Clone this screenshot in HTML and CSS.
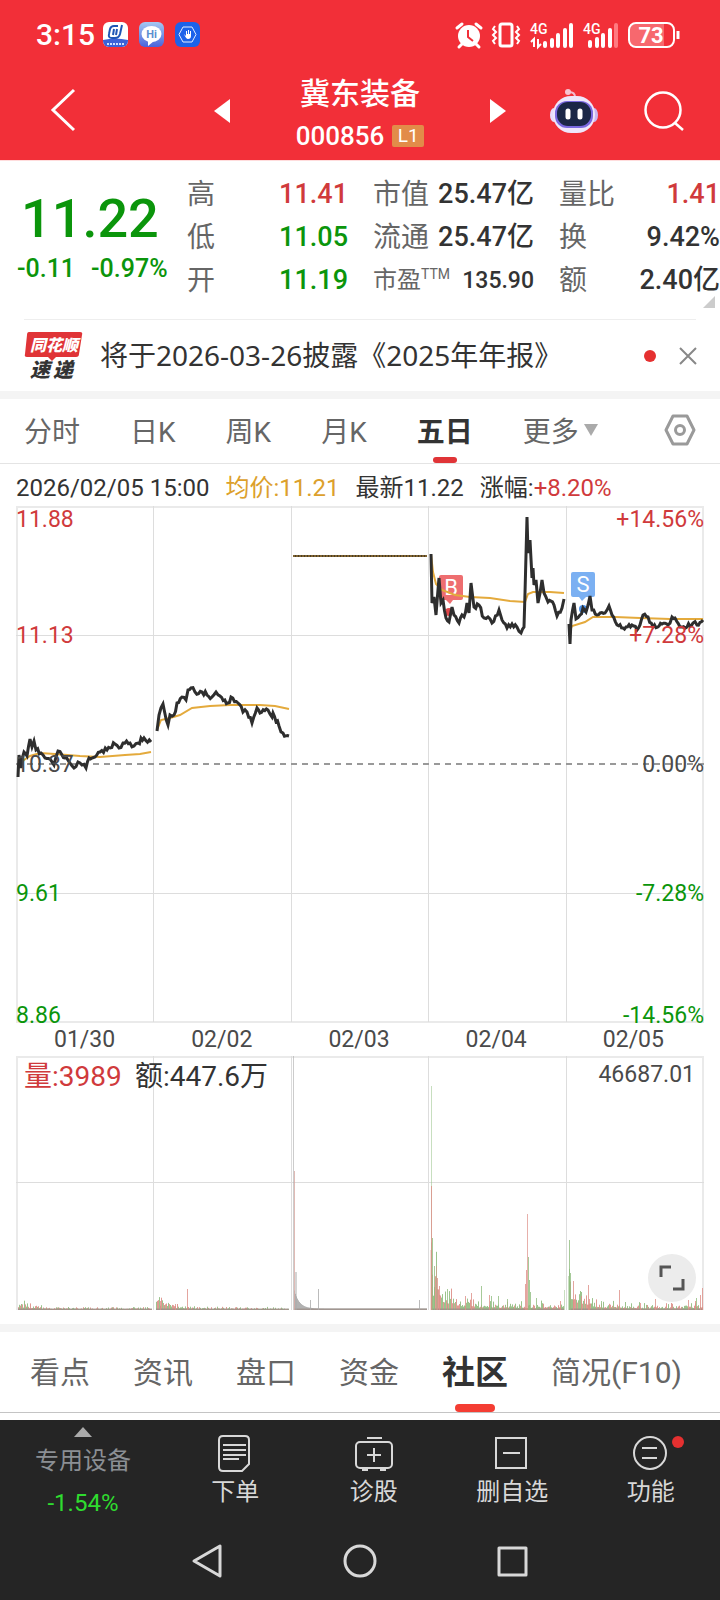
FILE: index.html
```html
<!DOCTYPE html>
<html lang="zh-CN">
<head>
  <meta charset="UTF-8">
  <meta name="viewport" content="width=device-width, initial-scale=1.0">
  <title>冀东装备 000856</title>
  <link rel="stylesheet" href="styles.css">
</head>
<body>
  <header class="header">
    <div class="status-bar">
      <span class="time">3:15</span>
      <svg class="app-icon" width="25" height="25" viewBox="0 0 25 25">
        <rect width="25" height="25" rx="6" fill="#fff"/>
        <path d="M0 18q12-3 25 0v1a6 6 0 0 1-6 6H6a6 6 0 0 1-6-6z" fill="#3c62d8"/>
        <path d="M19 3l-2 9q-1 4-5 4H9q-4 0-3-4l1-5q1-3 4-3h4M11 7l-1 6M14 7l-1 6" fill="none" stroke="#1f55b5" stroke-width="2"/>
        <path d="M4 22h17" stroke="#cfe0ff" stroke-width="2" stroke-dasharray="2 1"/>
      </svg>
      <svg class="app-icon" width="25" height="25" viewBox="0 0 25 25">
        <defs><linearGradient id="hi" x1="0" y1="0" x2="0" y2="1"><stop offset="0" stop-color="#a5c8f2"/><stop offset="1" stop-color="#4a63dc"/></linearGradient></defs>
        <rect width="25" height="25" rx="6" fill="url(#hi)"/>
        <ellipse cx="12.500" cy="12" rx="10" ry="8" fill="#fff"/>
        <path d="M9 18v6l6-5z" fill="#fff"/>
        <text x="12.500" y="16" text-anchor="middle" font-size="11" font-weight="700" fill="#5b8fd0">Hi</text>
      </svg>
      <svg class="app-icon" width="25" height="25" viewBox="0 0 25 25">
        <rect width="25" height="25" rx="6" fill="#1c62ea"/>
        <path d="M8 5h9l4 7.500-4 7.500H8l-4-7.500z" fill="none" stroke="#e3edff"/>
        <path d="M9 12l2 2V9h1v3h1V8h1v4h1V9h1v5q0 3-3 3-2 0-4-5z" fill="#fff"/>
      </svg>
      <div class="status-right">
        <svg width="26" height="26" viewBox="0 0 26 26">
          <circle cx="13" cy="14" r="11" fill="#fff"/>
          <path d="M1 6l5-4M25 6l-5-4M6 22l-3 3M20 22l3 3" stroke="#fff" stroke-width="3" stroke-linecap="round"/>
          <path d="M12 8v7l5 4" fill="none" stroke="#f22f38" stroke-width="2"/>
        </svg>
        <svg width="30" height="26" viewBox="0 0 30 26" fill="none" stroke="#fff">
          <rect x="9" y="2" width="12" height="22" rx="2" stroke-width="3"/>
          <path d="M4 4L2 7l3 3-3 3 3 3-3 3 2 3M26 4l2 3-3 3 3 3-3 3 3 3-2 3" stroke-width="2"/>
        </svg>
        <svg width="44" height="26" viewBox="0 0 44 26">
          <text x="0" y="12" font-size="14" font-weight="500" fill="#fff">4G</text>
          <path d="M4 25v-8l-3 3M8 17v8l3-3" fill="none" stroke="#fff" stroke-width="2"/>
          <path d="M15 24v-3M22 24v-6M28 24v-11M35 24V8M41 24V3" stroke="#fff" stroke-width="4" stroke-linecap="round"/>
        </svg>
        <svg width="36" height="26" viewBox="0 0 36 26">
          <text x="0" y="12" font-size="14" font-weight="500" fill="#fff">4G</text>
          <path d="M7 24v-4M14 24v-7M20 24v-11M27 24V8" stroke="#fff" stroke-width="4" stroke-linecap="round"/>
          <path d="M33 24V3" stroke="#ff7a80" stroke-width="4" stroke-linecap="round"/>
        </svg>
        <svg width="52" height="26" viewBox="0 0 52 26">
          <path d="M8 2h28v22H8q-6 0-6-6V8q0-6 6-6z" fill="#f7686e"/>
          <rect x="1" y="1" width="45" height="24" rx="7" fill="none" stroke="#fff" stroke-width="2"/>
          <path d="M50 9v8" stroke="#fff" stroke-width="3"/>
          <text x="23" y="21" text-anchor="middle" font-size="22" font-weight="700" fill="#fff">73</text>
        </svg>
      </div>
    </div>
    <div class="title-bar">
      <button class="icon-btn back" aria-label="返回">
        <svg width="26" height="44" viewBox="0 0 26 44"><path d="M24 1L3 21l21 20" fill="none" stroke="#fff" stroke-width="3"/></svg>
      </button>
      <div class="stock-switch">
        <button class="icon-btn" aria-label="上一只"><svg width="16" height="24" viewBox="0 0 16 24"><path d="M16 0v24L0 12z" fill="#fff"/></svg></button>
        <div class="stock">
          <h1>冀东装备</h1>
          <p>000856 <span class="level">L1</span></p>
        </div>
        <button class="icon-btn" aria-label="下一只"><svg width="16" height="24" viewBox="0 0 16 24"><path d="M0 0v24l16-12z" fill="#fff"/></svg></button>
      </div>
      <div class="tools">
        <button class="icon-btn" aria-label="智能助手">
          <svg width="48" height="46" viewBox="0 0 48 46">
            <path d="M25 9q0-5-6-5" fill="none" stroke="#f3b9cf" stroke-width="2"/>
            <circle cx="18" cy="4" r="3" fill="#f7c3d2"/>
            <ellipse cx="4" cy="27" rx="4" ry="7" fill="#e9dcfa"/>
            <ellipse cx="44" cy="27" rx="4" ry="7" fill="#c9b8f2"/>
            <rect x="3" y="8" width="42" height="37" rx="18" fill="#eee6fb"/>
            <rect x="5" y="13" width="38" height="27" rx="12" fill="#7a69e0"/>
            <rect x="7" y="14" width="34" height="24" rx="11" fill="#1b2747"/>
            <path d="M18 23v6M30 23v6" stroke="#fff" stroke-width="5" stroke-linecap="round"/>
          </svg>
        </button>
        <button class="icon-btn" aria-label="搜索">
          <svg width="40" height="40" viewBox="0 0 40 40" fill="none" stroke="#fff" stroke-width="2.500"><circle cx="19" cy="19" r="17.500"/><path d="M31 32l8 7"/></svg>
        </button>
      </div>
    </div>
  </header>

  <main>
    <section class="quote">
      <div class="price down">
        <strong>11.22</strong>
        <p><span>-0.11</span><span>-0.97%</span></p>
      </div>
      <dl class="stats">
        <div><dt>高</dt><dd class="up">11.41</dd></div>
        <div><dt>市值</dt><dd>25.47亿</dd></div>
        <div><dt>量比</dt><dd class="up">1.41</dd></div>
        <div><dt>低</dt><dd class="down">11.05</dd></div>
        <div><dt>流通</dt><dd>25.47亿</dd></div>
        <div><dt>换</dt><dd>9.42%</dd></div>
        <div><dt>开</dt><dd class="down">11.19</dd></div>
        <div class="small"><dt>市盈<sup>TTM</sup></dt><dd>135.90</dd></div>
        <div><dt>额</dt><dd>2.40亿</dd></div>
      </dl>
      <span class="corner"></span>
    </section>

    <section class="notice">
      <svg class="notice-logo" width="60" height="54" viewBox="0 0 60 54" font-weight="900" font-style="italic">
        <path d="M5 3h51q3 0 2 3l-3 19q0 3-3 3H32l-4 4-4-4H3q-3 0-2-3L3 6q0-3 2-3z" fill="#e03437"/>
        <text x="6" y="22" font-size="16" fill="#fff">同花顺</text>
        <text x="6" y="48" font-size="20" fill="#333">速</text>
        <text x="29" y="48" font-size="20" fill="#333">递</text>
      </svg>
      <a href="#report">将于2026-03-26披露《2025年年报》</a>
      <span class="dot"></span>
      <button class="icon-btn" aria-label="关闭"><svg width="16" height="16" viewBox="0 0 16 16"><path d="M0 0l16 16M16 0L0 16" stroke="#888" stroke-width="2"/></svg></button>
    </section>

    <nav class="period-tabs">
      <button>分时</button>
      <button>日K</button>
      <button>周K</button>
      <button>月K</button>
      <button class="active">五日</button>
      <button class="more">更多 <svg width="14" height="12" viewBox="0 0 14 12"><path d="M0 0h14L7 12z" fill="#aaa"/></svg></button>
      <button class="setting" aria-label="设置">
        <svg width="32" height="32" viewBox="0 0 32 32" fill="none" stroke="#9a9a9a" stroke-width="3"><path d="M9 2h14l7 14-7 14H9L2 16z" stroke-linejoin="round"/><circle cx="16" cy="16" r="4.500"/></svg>
      </button>
    </nav>

    <section class="chart">
      <p class="chart-info">
        <span>2026/02/05 15:00</span>
        <span class="avg">均价:11.21</span>
        <span>最新11.22</span>
        <span>涨幅:<b>+8.20%</b></span>
      </p>
      <svg class="price-chart" viewBox="0 0 720 518">
        <g class="grid">
          <path d="M16 1h688M16 516h688M17 0v517M703 0v517" class="frame"/>
          <path d="M16 129.500h688M16 387.500h688M153.500 0v516M291.500 0v516M428.500 0v516M566.500 0v516"/>
        </g>
        <path d="M16 258h688" class="zero"/>
        <circle cx="449" cy="106" r="4" fill="#e0474a"/>
        <path d="M441 69h20q2 0 2 2v21q0 2-2 2h-8l-3 4-4-4h-5q-2 0-2-2V71q0-2 2-2z" fill="#ee6e70"/>
        <text x="451" y="89" class="mark">B</text>
        <circle cx="583" cy="103" r="4" fill="#4c92e8"/>
        <path d="M573 66h20q2 0 2 2v21q0 2-2 2h-7l-4 4-3-4h-6q-2 0-2-2V68q0-2 2-2z" fill="#7bb0f2"/>
        <text x="583" y="86" class="mark">S</text>
        <g id="lines"></g>
        <g class="labels">
          <text x="16" y="21" class="up">11.88</text>
          <text x="16" y="137" class="up">11.13</text>
          <text x="16" y="266">10.37</text>
          <text x="16" y="395" class="down">9.61</text>
          <text x="16" y="517" class="down">8.86</text>
        </g>
        <g class="labels end">
          <text x="704" y="21" class="up">+14.56%</text>
          <text x="704" y="137" class="up">+7.28%</text>
          <text x="704" y="266">0.00%</text>
          <text x="704" y="395" class="down">-7.28%</text>
          <text x="704" y="517" class="down">-14.56%</text>
        </g>
      </svg>
      <div class="dates">
        <span>01/30</span><span>02/02</span><span>02/03</span><span>02/04</span><span>02/05</span>
      </div>
      <div class="volume">
        <svg viewBox="0 0 720 254">
          <g class="grid">
            <path d="M16 1h688M17 0v254M703 0v254" class="frame"/>
            <path d="M16 126.500h688M153.500 0v254M291.500 0v254M428.500 0v254M566.500 0v254"/>
          </g>
          <g id="bars"></g>
          <text x="24" y="30" class="vol-text up">量:3989</text>
          <text x="135" y="30" class="vol-text">额:447.6万</text>
          <text x="695" y="26" class="vol-max">46687.01</text>
        </svg>
        <button class="expand" aria-label="全屏">
          <svg width="26" height="26" viewBox="0 0 26 26"><path d="M2 12V2h10M14 24h10V14" fill="none" stroke="#555" stroke-width="3"/></svg>
        </button>
      </div>
    </section>

    <nav class="info-tabs">
      <button>看点</button>
      <button>资讯</button>
      <button>盘口</button>
      <button>资金</button>
      <button class="active">社区</button>
      <button>简况(F10)</button>
    </nav>
  </main>

  <footer class="footer">
    <div class="actions">
      <a href="#industry" class="industry">
        <svg width="18" height="10" viewBox="0 0 18 10"><path d="M9 0l9 10H0z" fill="#aaa"/></svg>
        <span>专用设备</span>
        <em>-1.54%</em>
      </a>
      <button>
        <svg width="36" height="38" viewBox="0 0 36 38" fill="none" stroke="#d8d8d8" stroke-width="2"><path d="M6 2h22q4 0 4 4v24l-7 7H6q-4 0-4-4V6q0-4 4-4zM6 11h23M6 16h23M6 21h23M6 25h16"/></svg>
        <span>下单</span>
      </button>
      <button>
        <svg width="40" height="38" viewBox="0 0 40 38" fill="none" stroke="#d8d8d8" stroke-width="2"><rect x="2" y="8" width="36" height="26" rx="4"/><path d="M13 4h15M20 14v14M13 21h14M8 36h6M26 36h6"/></svg>
        <span>诊股</span>
      </button>
      <button>
        <svg width="36" height="38" viewBox="0 0 36 38" fill="none" stroke="#d8d8d8" stroke-width="2"><rect x="2" y="4" width="30" height="30"/><path d="M9 19h17"/></svg>
        <span>删自选</span>
      </button>
      <button>
        <svg width="36" height="38" viewBox="0 0 36 38" fill="none" stroke="#d8d8d8" stroke-width="2"><circle cx="17" cy="19" r="16"/><path d="M9 14h15M9 24h15"/></svg>
        <span>功能</span>
        <i class="badge"></i>
      </button>
    </div>
    <div class="system-nav">
      <button class="icon-btn" aria-label="系统返回"><svg width="30" height="34" viewBox="0 0 30 34"><path d="M27 2v30L1 17z" class="sys"/></svg></button>
      <button class="icon-btn" aria-label="主页"><svg width="34" height="34" viewBox="0 0 34 34"><circle cx="17" cy="17" r="15" class="sys"/></svg></button>
      <button class="icon-btn" aria-label="最近任务"><svg width="30" height="34" viewBox="0 0 30 34"><rect x="2" y="4" width="27" height="27" class="sys"/></svg></button>
    </div>
  </footer>
  <script src="chart.js"></script>
</body>
</html>
```
FILE: styles.css
```css
* {
  margin: 0;
  padding: 0;
  box-sizing: border-box;
}

body {
  font-family: Roboto, "Noto Sans CJK SC", sans-serif;
  background: #fff;
  color: #333;
}

svg {
  display: block;
  flex-shrink: 0;
  overflow: visible;
}

button {
  font: inherit;
  color: inherit;
  background: none;
  border: none;
  cursor: pointer;
}

a {
  color: inherit;
  text-decoration: none;
}

.up {
  color: #d03a3c;
  fill: #d03a3c;
}

.down {
  color: #0b950b;
  fill: #0b950b;
}

/* Header */
.header {
  background: #f22f38;
  color: #fff;
  padding-bottom: 3px;
  border-bottom: 1px solid #fdd;
}

.status-bar {
  display: flex;
  align-items: center;
  height: 65px;
  padding: 4px 40px 0 36px;
}

.time {
  font-size: 30px;
  font-weight: 500;
  margin-right: 8px;
}

.app-icon {
  margin-right: 11px;
}

.status-right {
  display: flex;
  gap: 9px;
  margin-left: auto;
}

.title-bar {
  display: grid;
  grid-template-columns: 1fr 292px 1fr;
  align-items: center;
  height: 92px;
  padding: 0 36px;
}

.back {
  padding-left: 14px;
  justify-self: start;
}

.stock-switch {
  display: flex;
  align-items: center;
  justify-content: space-between;
}

.stock {
  padding-top: 8px;
  text-align: center;
}

.stock h1 {
  font-size: 30px;
  font-weight: 500;
  line-height: 42px;
}

.stock p {
  display: flex;
  align-items: center;
  justify-content: center;
  gap: 8px;
  font-size: 26px;
  font-weight: 500;
  line-height: 42px;
}

.level {
  width: 32px;
  font-size: 19px;
  font-weight: 400;
  line-height: 22px;
  background: #e28c49;
  border-radius: 2px;
}

.tools {
  display: flex;
  align-items: center;
  justify-content: flex-end;
  gap: 46px;
}

/* Quote */
.quote {
  position: relative;
  display: flex;
  padding: 12px 0 17px 17px;
}

.price {
  width: 170px;
  flex-shrink: 0;
}

.price strong {
  display: block;
  padding-left: 4px;
  font-size: 54px;
  font-weight: 500;
  line-height: 60px;
  margin-top: 16px;
}

.price p {
  display: flex;
  gap: 16px;
  font-size: 25px;
  font-weight: 500;
  line-height: 40px;
}

.stats {
  flex: 1;
  display: grid;
  grid-template-columns: repeat(3, 1fr);
  column-gap: 25px;
}

.stats div {
  display: flex;
  justify-content: space-between;
  line-height: 43px;
  height: 43px;
  white-space: nowrap;
}

.stats dt {
  font-size: 28px;
  color: #666;
}

.stats dd {
  font-size: 27px;
  font-weight: 500;
}

.stats .small dt {
  font-size: 24px;
}

.stats .small dd {
  font-size: 23px;
}

.stats sup {
  font-size: 14px;
  line-height: 1;
}

.corner {
  position: absolute;
  right: 5px;
  bottom: 11px;
  border-bottom: 12px solid #ccc;
  border-left: 12px solid transparent;
}

/* Notice */
.notice {
  display: flex;
  align-items: center;
  height: 72px;
  margin: 0 24px;
  border-top: 1px solid #eee;
}

.notice a {
  flex: 1;
  margin-left: 16px;
  font-family: "Noto Sans", "Noto Sans CJK SC", sans-serif;
  font-size: 28px;
  line-height: 38px;
  padding-bottom: 2px;
  white-space: nowrap;
}

.notice .dot {
  width: 12px;
  height: 12px;
  margin-right: 24px;
  border-radius: 50%;
  background: #e53030;
}

/* Period tabs */
.period-tabs {
  display: flex;
  align-items: center;
  gap: 50px;
  height: 73px;
  padding: 0 24px;
  border-top: 8px solid #f4f4f4;
  border-bottom: 1px solid #e4e4e4;
  font-size: 28px;
  color: #666;
}

.period-tabs button {
  position: relative;
  height: 64px;
  padding-bottom: 2px;
  white-space: nowrap;
}

.period-tabs .active,
.info-tabs .active {
  font-weight: 700;
  color: #333;
}

.active::after {
  content: "";
  position: absolute;
  left: 50%;
  bottom: 0;
  width: 24px;
  height: 6px;
  border-radius: 4px;
  background: #e03437;
  transform: translateX(-50%);
}

.more {
  display: flex;
  align-items: center;
  gap: 5px;
}

.setting {
  margin-left: auto;
}

/* Charts */
.chart-info {
  display: flex;
  gap: 16px;
  padding: 6px 16px 0;
  font-size: 24px;
  line-height: 36px;
  white-space: nowrap;
}

.chart-info .avg {
  color: #dca02c;
}

.chart-info b {
  font-weight: 400;
  color: #d03a3c;
}

.price-chart,
.volume svg {
  width: 100%;
}

.grid path {
  fill: none;
  stroke: #ddd;
}

.grid .frame {
  stroke: #eaeaea;
  stroke-width: 2;
}

.zero {
  stroke: #999;
  stroke-width: 2;
  stroke-dasharray: 6 5;
}

.line {
  fill: none;
  stroke: #2e2e2e;
  stroke-width: 3;
}

.avg-line {
  fill: none;
  stroke: #e4aa3c;
  stroke-width: 2;
}

.limit-line {
  stroke: #4a3d26;
  stroke-width: 2;
}

.mark {
  font-size: 22px;
  fill: #fff;
  text-anchor: middle;
}

.labels {
  font-size: 23px;
  fill: #4a4a4a;
}

.end {
  text-anchor: end;
}

.dates {
  display: grid;
  grid-template-columns: repeat(5, 1fr);
  padding: 0 18px 0 16px;
  font-size: 23px;
  line-height: 32px;
  text-align: center;
  color: #4a4a4a;
}

.volume {
  position: relative;
  padding-bottom: 14px;
}

.vol-text {
  font-size: 28px;
}

.vol-text:not(.up) {
  fill: #333;
}

.vol-max {
  font-size: 23px;
  fill: #4a4a4a;
  text-anchor: end;
}

.volume .expand {
  position: absolute;
  right: 24px;
  bottom: 22px;
  width: 48px;
  height: 48px;
  border-radius: 50%;
  background: #ececec;
}

.expand svg {
  width: 26px;
  margin: 0 auto;
}

/* Info tabs */
.info-tabs {
  display: flex;
  gap: 43px;
  padding-left: 30px;
  margin-bottom: 7px;
  border-top: 8px solid #f4f4f4;
  border-bottom: 1px solid #c4c4c4;
  font-size: 30px;
  color: #666;
}

.info-tabs button {
  position: relative;
  height: 80px;
  padding-bottom: 4px;
  white-space: nowrap;
}

.info-tabs .active {
  font-size: 33px;
}

.info-tabs .active::after {
  width: 40px;
  height: 8px;
  background: #f43d33;
}

/* Footer */
.footer {
  background: #252525;
  color: #d8d8d8;
}

.actions {
  display: grid;
  grid-template-columns: 166px repeat(4, 1fr);
  height: 102px;
  font-size: 24px;
}

.actions a,
.actions button {
  position: relative;
  display: flex;
  flex-direction: column;
  align-items: center;
  padding-top: 14px;
  line-height: 40px;
}

.actions .industry {
  padding-top: 7px;
  color: #8b8f94;
}

.industry span {
  line-height: 48px;
}

.industry em {
  font-style: normal;
  line-height: 36px;
  color: #2fdc2f;
}

.badge {
  position: absolute;
  top: 16px;
  left: 50%;
  width: 12px;
  height: 12px;
  margin-left: 21px;
  border-radius: 50%;
  background: #e53030;
}

.system-nav {
  display: flex;
  align-items: center;
  justify-content: center;
  gap: 120px;
  height: 78px;
}

.sys {
  fill: none;
  stroke: #d8d8d8;
  stroke-width: 3;
  stroke-linejoin: round;
}
```
FILE: chart.js
```js
var NS = 'http://www.w3.org/2000/svg';

// small repeatable noise so the chart looks the same on every load
var seed = 11;
function rnd() {
  seed = (seed * 16807) % 2147483647;
  return seed / 2147483647;
}

function addPath(parent, d, attrs) {
  var p = document.createElementNS(NS, 'path');
  p.setAttribute('d', d);
  for (var k in attrs) p.setAttribute(k, attrs[k]);
  parent.appendChild(p);
}

var prices = [
  [[18,271],[19,249],[21,262],[24,246],[27,250],[30,233],[32,241],[34,235],[36,244],[41,247],[45,252],[50,253],[54,259],[58,245],[62,249],[65,252],[70,257],[74,262],[78,256],[82,259],[86,262],[89,252],[95,251],[100,246],[107,244],[115,238],[119,242],[123,237],[130,237],[134,240],[138,237],[144,232],[151,236]],
  [[157,225],[159,209],[163,198],[168,219],[170,209],[174,209],[177,197],[182,191],[186,194],[188,184],[191,182],[195,186],[202,186],[207,189],[212,191],[216,186],[220,190],[228,197],[231,191],[238,197],[243,206],[247,206],[252,217],[257,202],[260,207],[268,204],[272,211],[273,207],[279,220],[283,227],[289,230]],
  [[431,48],[432,97],[434,91],[436,109],[439,72],[441,97],[443,94],[446,112],[449,116],[452,101],[454,109],[459,117],[462,109],[464,111],[467,97],[469,107],[471,77],[474,101],[479,99],[484,112],[488,111],[492,117],[499,104],[502,114],[507,122],[512,118],[517,121],[521,127],[524,121],[525,87],[527,11],[528,47],[530,34],[532,72],[533,62],[534,79],[536,74],[538,97],[542,74],[544,87],[548,96],[554,99],[557,110],[562,102],[564,93]],
  [[569,118],[570,138],[571,114],[574,97],[576,113],[580,109],[583,102],[586,106],[590,90],[592,104],[597,109],[605,107],[609,100],[612,109],[617,119],[623,122],[632,119],[637,124],[640,119],[643,109],[648,111],[653,121],[662,118],[668,119],[672,111],[675,112],[680,121],[687,121],[693,117],[697,119],[703,114]]
];

var averages = [
  'M18 262L24 254 30 250 40 247 55 248 80 250 100 251 125 249 140 248 151 246',
  'M157 224L161 214 170 212 180 209 192 202 210 200 230 199 260 199 275 200 289 203',
  'M431 48L433 66 436 78 442 84 455 89 470 91 490 92 510 95 525 96 528 88 533 86 550 86 564 87',
  'M569 128L572 120 585 116 593 111 615 111 640 112 670 113 703 113'
];

var lines = document.getElementById('lines');
averages.forEach(function (d) { addPath(lines, d, { 'class': 'avg-line' }); });

prices.forEach(function (pts) {
  var d = 'M' + pts[0].join(' ');
  for (var i = 1; i < pts.length; i++) {
    var a = pts[i - 1], b = pts[i];
    var n = Math.floor((b[0] - a[0]) / 1.5);
    for (var j = 1; j < n; j++) {
      var t = j / n;
      d += 'L' + (a[0] + (b[0] - a[0]) * t).toFixed(1) + ' ' + (a[1] + (b[1] - a[1]) * t + (rnd() - 0.5) * 5).toFixed(1);
    }
    d += 'L' + b.join(' ');
  }
  addPath(lines, d, { 'class': 'line' });
});

// 02/03 stayed at the limit price all day
addPath(lines, 'M293 50H427', { 'class': 'limit-line' });
addPath(lines, 'M293 50H427', { stroke: '#b58a3a', 'stroke-dasharray': '2 1' });

// Volume
var RED = '#dd8f87', GREEN = '#90bd80', GRAY = '#aaaaaa';
var bars = document.getElementById('bars');

function bar(x, h, color, opacity) {
  addPath(bars, 'M' + (x + 0.5) + ' 254v-' + h.toFixed(1), { stroke: color, 'stroke-opacity': opacity || 0.8 });
}

var days = [
  { from: 18, to: 152, open: 4, fade: 14, base: 1.5 },
  { from: 156, to: 289, open: 7, fade: 16, base: 1.5 },
  { from: 294, to: 427, open: 18, fade: 5, base: 1.5, color: GRAY },
  { from: 431, to: 564, open: 28, fade: 15, base: 3.5 },
  { from: 569, to: 703, open: 20, fade: 14, base: 3 }
];

days.forEach(function (day) {
  for (var x = day.from; x < day.to; x++) {
    var level = day.base + day.open * Math.exp(-(x - day.from) / day.fade);
    var noise = day.color ? 1 : 0.5 + rnd() * rnd() * 2.2;
    bar(x, level * noise, day.color || (rnd() > 0.5 ? RED : GREEN), 0.9);
    bar(x, 1.5, '#9c8f88');
  }
});

var spikes = [
  [187, 21, RED], [160, 9, RED], [175, 6, RED],
  [293, 254, GRAY, 0.6], [294, 139, '#d8aaa4', 0.8], [295, 38, GRAY, 0.5], [296, 38, GRAY, 0.5], [310, 10, GRAY], [318, 21, GRAY], [419, 10, GRAY],
  [431, 224, GREEN, 0.5], [431, 124, RED], [430, 60, RED, 0.3], [432, 72, GREEN], [434, 44, GREEN], [436, 44, RED, 0.5], [437, 32, RED], [439, 24, RED],
  [447, 21, GREEN], [465, 14, RED], [471, 17, RED], [481, 24, GREEN], [489, 15, RED], [491, 14, GREEN], [498, 14, GREEN], [507, 11, GREEN],
  [525, 26, RED], [526, 40, RED], [527, 96, RED, 0.7], [528, 53, GREEN], [529, 30, GREEN], [530, 18, GREEN], [536, 12, GREEN], [560, 9, RED], [564, 20, GREEN, 0.5],
  [568, 34, GREEN, 0.5], [569, 70, GREEN], [570, 37, GREEN], [573, 29, RED], [581, 14, RED], [588, 25, RED], [589, 11, RED], [601, 9, GREEN], [619, 20, RED], [640, 7, RED],
  [655, 11, RED], [688, 10, RED], [695, 9, RED], [696, 12, GREEN], [700, 15, RED], [702, 22, RED]
];
spikes.forEach(function (s) { bar(s[0], s[1], s[2], s[3]); });
```
